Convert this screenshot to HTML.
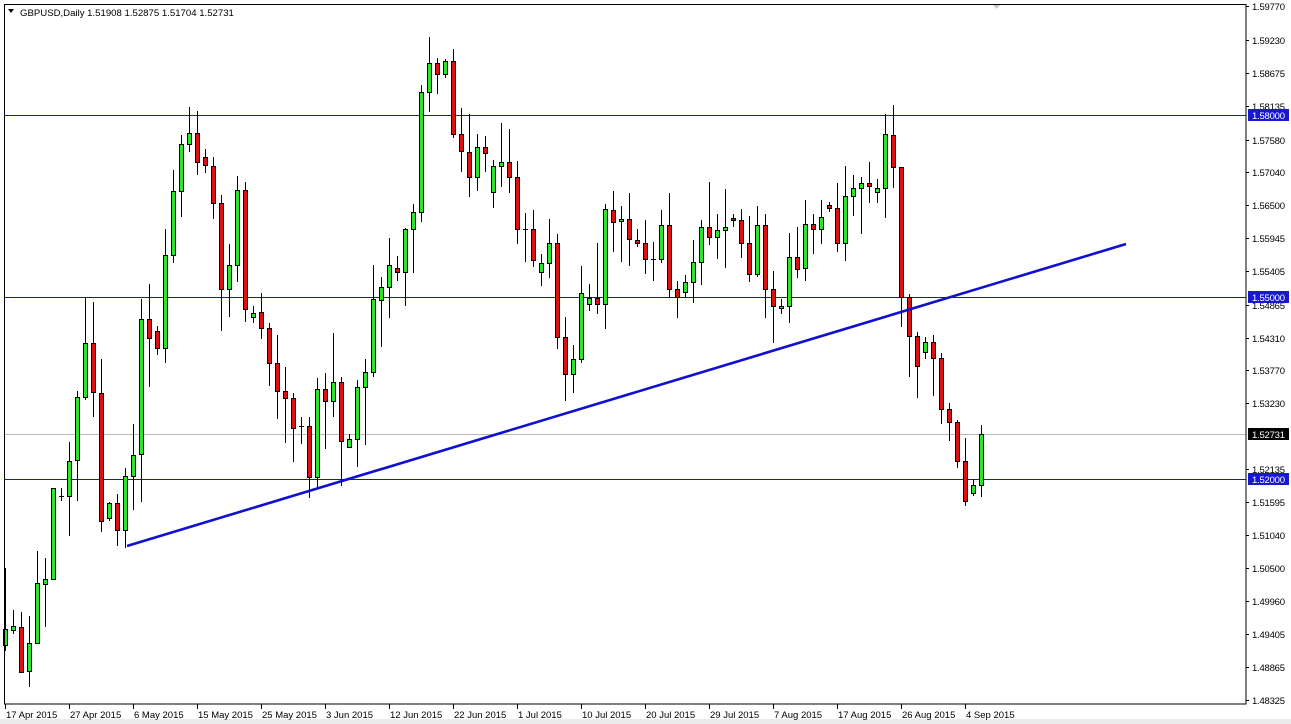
<!DOCTYPE html>
<html><head><meta charset="utf-8"><style>
html,body{margin:0;padding:0;background:#fff;}
body{width:1291px;height:724px;overflow:hidden;position:relative;font-family:"Liberation Sans",sans-serif;}
svg{position:absolute;left:0;top:0;}
</style></head><body>
<svg id="c" width="1291" height="724" xmlns="http://www.w3.org/2000/svg" font-family="Liberation Sans, sans-serif" font-size="9.5">
<rect x="0" y="0" width="1291" height="724" fill="#fff"/>
<rect x="0" y="719" width="1291" height="5" fill="#ececec"/>
<line x1="4" y1="115.5" x2="1246" y2="115.5" stroke="#1818b0" stroke-width="1"/>
<line x1="4" y1="297.5" x2="1246" y2="297.5" stroke="#1818b0" stroke-width="1"/>
<line x1="4" y1="479.5" x2="1246" y2="479.5" stroke="#1818b0" stroke-width="1"/>
<line x1="4" y1="434.5" x2="1246" y2="434.5" stroke="#b8b8b8" stroke-width="1"/>
<g id="cd"></g>
<line x1="127" y1="546" x2="1126" y2="244" stroke="#1010d0" stroke-width="2.6"/>
<rect x="4.5" y="4.5" width="1241.5" height="699.5" fill="none" stroke="#000" stroke-width="1"/>
<text x="20" y="16" fill="#000" font-size="9.6">GBPUSD,Daily  1.51908 1.52875 1.51704 1.52731</text>
<polygon points="8,9 14,9 11,13" fill="#000"/>
<polygon points="993,5 1000,5 996.5,9" fill="#c8c8c8"/>
<g id="ax"></g>
</svg>
<script>
var d=[
['g',629,645,568,651],['g',626,630,610,634],['r',627,672,612,673],['g',643,671,616,687],['g',583,643,551,644],
['g',579,584,558,627],['g',488,579,488,580],['d',496,496,488,501],['g',461,496,442,536],['g',397,460,391,501],
['g',343,397,297,400],['r',343,392,302,417],['r',393,521,359,532],['g',503,518,502,521],['r',503,530,494,546],
['g',476,530,468,548],['g',455,476,424,510],['g',319,454,299,502],['r',319,338,284,387],['r',331,348,326,355],
['g',255,348,229,363],['g',191,255,170,263],['g',144,191,135,217],['g',133,144,107,152],['r',133,162,111,175],
['r',157,165,149,173],['r',166,203,157,219],['r',203,289,195,331],['g',265,289,244,317],['g',190,265,176,282],
['r',190,309,182,322],['g',313,317,306,323],['r',312,328,293,339],['r',328,363,323,386],['r',363,391,335,419],
['r',391,398,367,443],['r',398,428,393,462],['d',426,426,417,444],['r',426,477,417,498],['g',389,477,378,489],
['r',389,401,373,449],['g',382,401,333,417],['r',382,441,377,486],['g',439,447,434,447],['g',387,439,380,467],
['g',372,387,359,445],['g',299,372,265,377],['g',287,300,277,347],['g',265,287,238,318],['r',268,272,256,281],
['g',229,272,228,306],['g',212,229,204,273],['g',92,212,85,222],['g',63,92,37,112],['r',63,74,58,94],
['g',61,74,59,78],['r',61,134,49,138],['r',134,151,108,172],['r',152,177,114,197],['g',147,177,134,191],
['r',147,153,136,172],['g',166,192,160,208],['g',162,166,123,187],['r',162,177,129,193],['r',177,229,161,244],
['d',229,229,213,262],['r',229,260,210,267],['g',263,272,254,286],['g',243,263,219,278],['r',243,337,234,349],
['r',337,374,317,401],['g',359,374,345,393],['g',293,359,266,363],['g',298,304,284,311],['r',298,304,243,314],
['g',209,304,204,329],['r',210,222,191,252],['g',219,221,206,262],['r',219,239,193,266],['r',240,243,229,247],
['r',243,259,220,274],['d',259,259,242,281],['g',225,259,210,263],['r',225,289,193,297],['r',289,297,281,318],
['g',282,292,275,297],['g',262,282,240,303],['g',227,262,220,285],['r',227,237,182,245],['g',230,237,214,259],
['g',227,230,189,268],['r',218,220,214,227],['r',220,243,209,258],['r',243,274,216,282],['g',225,274,206,277],
['r',225,289,214,318],['r',289,306,271,343],['g',306,308,299,314],['g',257,306,233,323],['r',257,269,227,278],
['g',224,268,200,281],['r',224,229,214,254],['g',217,229,200,244],['r',205,208,202,212],['r',208,243,183,252],
['g',196,243,166,261],['g',188,196,175,216],['g',183,188,177,234],['r',183,186,162,203],['g',188,192,179,203],
['g',134,188,114,218],['r',135,167,105,188],['r',167,297,167,327],['r',297,336,294,377],['r',336,366,332,398],
['g',342,352,337,359],['r',342,358,335,396],['r',358,409,353,424],['r',409,422,403,441],['r',422,461,420,468],
['r',461,501,438,506],['g',485,493,479,496],['g',434,485,425,497]];
var s='';
d.forEach(function(c,k){var x=5+8*k;
s+='<line x1="'+(x+0.5)+'" y1="'+c[3]+'" x2="'+(x+0.5)+'" y2="'+c[4]+'" stroke="#000"/>';
if(c[0]=='d'){s+='<line x1="'+(x-2)+'" y1="'+(c[1]+0.5)+'" x2="'+(x+3)+'" y2="'+(c[1]+0.5)+'" stroke="#000"/>';}
else{var h=Math.max(c[2]-c[1],2);s+='<rect x="'+(x-1.5)+'" y="'+(c[1]+0.5)+'" width="4" height="'+h+'" fill="'+(c[0]=='g'?'#2ee62e':'#dd1111')+'" stroke="#000" stroke-width="1"/>';}
});
document.getElementById('cd').innerHTML=s;
var a='';
var P=[['1.59770',6],['1.59230',40],['1.58675',73],['1.58135',106],['1.57580',140],['1.57040',172],['1.56500',205],['1.55945',238],['1.55405',271],['1.54865',305],['1.54310',338],['1.53770',370],['1.53230',403],['1.52135',469],['1.51595',502],['1.51040',535],['1.50500',568],['1.49960',601],['1.49405',634],['1.48865',667],['1.48325',700]];
P.forEach(function(p){a+='<line x1="1246" y1="'+(p[1]+0.5)+'" x2="1249" y2="'+(p[1]+0.5)+'" stroke="#000"/><text x="1252" y="'+(p[1]+4)+'" fill="#000" textLength="33">'+p[0]+'</text>';});
[['1.58000',115,'#1818d0'],['1.55000',297,'#1818d0'],['1.52000',479,'#1818d0'],['1.52731',434,'#000']].forEach(function(b){
a+='<rect x="1248" y="'+(b[1]-6)+'" width="41" height="12" fill="'+b[2]+'"/><text x="1252" y="'+(b[1]+4)+'" fill="#fff" textLength="33">'+b[0]+'</text>';});
var D=['17 Apr 2015','27 Apr 2015','6 May 2015','15 May 2015','25 May 2015','3 Jun 2015','12 Jun 2015','22 Jun 2015','1 Jul 2015','10 Jul 2015','20 Jul 2015','29 Jul 2015','7 Aug 2015','17 Aug 2015','26 Aug 2015','4 Sep 2015'];
D.forEach(function(t,i){var x=5+64*i;a+='<line x1="'+(x+0.5)+'" y1="704" x2="'+(x+0.5)+'" y2="709" stroke="#000"/><text x="'+(x+1)+'" y="718" fill="#000">'+t+'</text>';});
document.getElementById('ax').innerHTML=a;
</script>
</body></html>
